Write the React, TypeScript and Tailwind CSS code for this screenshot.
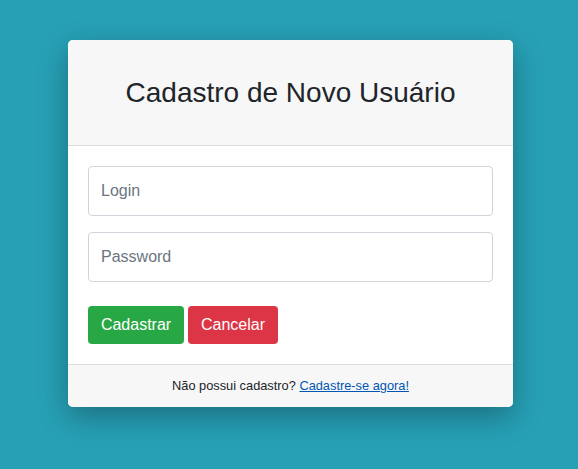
export default function App() {
  return (
    <div className="min-h-[469px] w-full bg-[#27a0b6] pt-[40px]" style={{ fontFamily: '"Liberation Sans", Arial, sans-serif' }}>
      <div className="ml-[68px] w-[445px] h-[367px] rounded-[5px] bg-white shadow-[0_10px_30px_rgba(0,0,0,0.3)] overflow-hidden flex flex-col">
        <div className="h-[106px] bg-[#f7f7f7] border-b border-[#dcdcdc] flex items-center justify-center">
          <h2 className="text-[28px] text-[#212529] leading-none">Cadastro de Novo Usuário</h2>
        </div>
        <div className="px-[20px] pt-[20px] pb-[20px] flex flex-col">
          <input
            placeholder="Login"
            className="h-[50px] w-full rounded-[4px] border border-[#ced4da] px-[12px] text-[16px] text-[#495057] placeholder:text-[#6c757d] outline-none"
          />
          <input
            type="password"
            placeholder="Password"
            className="mt-[16px] h-[50px] w-full rounded-[4px] border border-[#ced4da] px-[12px] text-[16px] text-[#495057] placeholder:text-[#6c757d] outline-none"
          />
          <div className="mt-[24px] flex gap-[4px]">
            <button className="h-[38px] w-[96px] rounded-[4px] bg-[#28a745] text-white text-[16px]">Cadastrar</button>
            <button className="h-[38px] w-[90px] rounded-[4px] bg-[#dc3545] text-white text-[16px]">Cancelar</button>
          </div>
        </div>
        <div className="flex-1 bg-[#f7f7f7] border-t border-[#dcdcdc] flex items-center justify-center text-[12.8px] text-[#212529]">
          <span>
            Não possui cadastro?{" "}
            <a href="#" className="text-[#0056b3] underline">Cadastre-se agora!</a>
          </span>
        </div>
      </div>
    </div>
  );
}
